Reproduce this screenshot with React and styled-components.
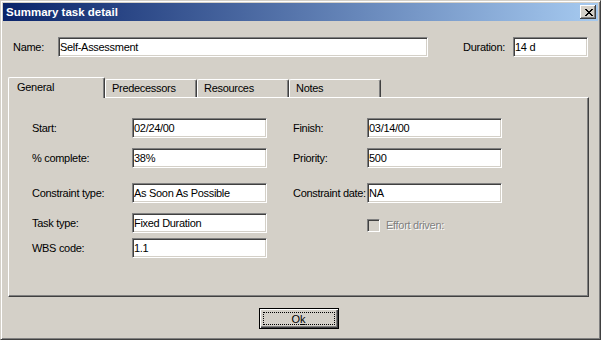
import React from 'react';
import styled, { createGlobalStyle } from 'styled-components';

const GlobalStyle = createGlobalStyle`
	html, body {
		margin: 0;
		padding: 0;
		background: #d4d0c8;
	}
	body {
		font-family: "Liberation Sans", Arial, sans-serif;
		font-size: 11px;
		color: #000;
	}
	* {
		box-sizing: border-box;
	}
`;

const rows = [
	{ gap: 0, left: ['Start:', '02/24/00'], right: ['Finish:', '03/14/00'] },
	{ gap: 10, left: ['% complete:', '38%'], right: ['Priority:', '500'] },
	{ gap: 15, left: ['Constraint type:', 'As Soon As Possible'], right: ['Constraint date:', 'NA'] },
	{ gap: 10, left: ['Task type:', 'Fixed Duration'], check: 'Effort driven:' },
	{ gap: 5, left: ['WBS code:', '1.1'] },
];

const tabs = ['General', 'Predecessors', 'Resources', 'Notes'];

const App = () => {
	return (
		<>
			<GlobalStyle />
			<Window>
				<TitleBar>
					<Title>Summary task detail</Title>
					<CloseButton aria-label='close'>
						<svg width='8' height='7' viewBox='0 0 8 7' shapeRendering='crispEdges'>
							<path d='M0 0h2v1h-2zM6 0h2v1h-2zM1 1h2v1h-2zM5 1h2v1h-2zM2 2h4v1h-4zM3 3h2v1h-2zM2 4h4v1h-4zM1 5h2v1h-2zM5 5h2v1h-2zM0 6h2v1h-2zM6 6h2v1h-2z' fill='#000' />
						</svg>
					</CloseButton>
				</TitleBar>

				<Body>
					<NameRow>
						<NameLabel>Name:</NameLabel>
						<Field $w={370} readOnly value='Self-Assessment' />
						<Spacer />
						<DurationLabel>Duration:</DurationLabel>
						<Field $w={75} readOnly value='14 d' />
					</NameRow>

					<TabStrip>
						{tabs.map((t, i) => (
							<Tab key={t} $active={i === 0}>
								{t}
							</Tab>
						))}
					</TabStrip>

					<Panel>
						{rows.map((r, i) => (
							<FormRow key={i} $gap={r.gap}>
								<Label>{r.left[0]}</Label>
								<Field $w={135} readOnly value={r.left[1]} />
								{r.right && (
									<>
										<Label $col={4}>{r.right[0]}</Label>
										<Field $w={135} readOnly value={r.right[1]} />
									</>
								)}
								{r.check && (
									<CheckCell>
										<CheckBox />
										<DisabledText>{r.check}</DisabledText>
									</CheckCell>
								)}
							</FormRow>
						))}
					</Panel>

					<Footer>
						<OkButton>
							<FocusRect>
								O<u>k</u>
							</FocusRect>
						</OkButton>
					</Footer>
				</Body>
			</Window>
		</>
	);
};

const Window = styled.div`
	width: 601px;
	height: 340px;
	display: flex;
	flex-direction: column;
	padding: 2px;

	background: #d4d0c8;
	border: 1px solid;
	border-color: #d4d0c8 #404040 #404040 #d4d0c8;
	box-shadow: inset 1px 1px #fff, inset -1px -1px #808080;
`;

const TitleBar = styled.div`
	display: flex;
	align-items: center;
	justify-content: space-between;
	height: 18px;
	padding: 0 2px 0 3px;

	background: linear-gradient(to right, #0a246a, #a6caf0);
`;

const Title = styled.span`
	color: #fff;
	font-weight: bold;
	font-size: 11.5px;
`;

const CloseButton = styled.div`
	display: flex;
	align-items: center;
	justify-content: center;
	width: 16px;
	height: 14px;
	padding-left: 1px;

	background: #d4d0c8;
	box-shadow: inset -1px -1px #404040, inset 1px 1px #fff, inset -2px -2px #808080;
`;

const Body = styled.div`
	flex: 1;
	display: flex;
	flex-direction: column;
	padding: 16px 9px 0 5px;
`;

const NameRow = styled.div`
	display: flex;
	align-items: center;
	height: 20px;
	padding: 0 1px 0 5px;
`;

const NameLabel = styled.span`
	width: 45px;
	letter-spacing: -0.3px;
`;

const DurationLabel = styled.span`
	margin-right: 8px;
	letter-spacing: -0.3px;
`;

const Spacer = styled.div`
	flex: 1;
`;

const Field = styled.input`
	width: ${(p) => p.$w}px;
	height: 20px;
	margin: 0;
	padding: 0 1px 1px 1px;
	outline: none;

	font-family: "Liberation Sans", Arial, sans-serif;
	font-size: 11px;
	letter-spacing: -0.3px;
	color: #000;
	background: #fff;
	border: 1px solid;
	border-color: #808080 #fff #fff #808080;
	box-shadow: inset 1px 1px #404040, inset -1px -1px #d4d0c8;
`;

const TabStrip = styled.div`
	display: flex;
	align-items: flex-end;
	height: 20px;
	margin-top: 20px;
`;

const Tab = styled.div`
	position: relative;
	z-index: ${(p) => (p.$active ? 1 : 0)};
	width: ${(p) => (p.$active ? 97 : 92)}px;
	height: ${(p) => (p.$active ? 21 : 18)}px;
	margin-bottom: ${(p) => (p.$active ? -1 : 0)}px;
	padding: ${(p) => (p.$active ? '3px 0 0 8px' : '2px 0 0 6px')};

	background: #d4d0c8;
	border-top: 1px solid #fff;
	border-left: 1px solid #fff;
	border-right: 1px solid #404040;
	border-top-left-radius: 2px;
	border-top-right-radius: 2px;
	box-shadow: inset -1px 0 #808080;
	letter-spacing: -0.3px;
`;

const Panel = styled.div`
	height: 200px;
	padding: 20px 0 0 23px;

	border: 1px solid;
	border-color: #fff #404040 #404040 #fff;
	box-shadow: inset -1px -1px #808080;
`;

const FormRow = styled.div`
	display: grid;
	grid-template-columns: 100px 135px 26px 74px 135px;
	align-items: center;
	height: 20px;
	margin-top: ${(p) => p.$gap}px;
`;

const Label = styled.span`
	grid-column: ${(p) => p.$col || 1};
	white-space: nowrap;
	letter-spacing: -0.3px;
`;

const CheckCell = styled.div`
	grid-column: 5;
	display: flex;
	align-items: center;
	gap: 6px;
	padding-top: 4px;
`;

const CheckBox = styled.span`
	width: 13px;
	height: 13px;

	background: #d4d0c8;
	border: 1px solid;
	border-color: #808080 #fff #fff #808080;
	box-shadow: inset 1px 1px #404040, inset -1px -1px #d4d0c8;
`;

const DisabledText = styled.span`
	color: #808080;
	text-shadow: 1px 1px #fff;
	letter-spacing: -0.3px;
`;

const Footer = styled.div`
	display: flex;
	justify-content: center;
	padding-top: 11px;
`;

const OkButton = styled.div`
	display: flex;
	width: 80px;
	height: 21px;
	padding: 3px;

	background: #d4d0c8;
	border: 1px solid #000;
	box-shadow: inset 1px 1px #fff, inset -1px -1px #404040, inset -2px -2px #808080;
`;

const FocusRect = styled.span`
	flex: 1;
	display: flex;
	align-items: center;
	justify-content: center;
	border: 1px dotted #000;
	font-size: 11px;
`;

export default App;
